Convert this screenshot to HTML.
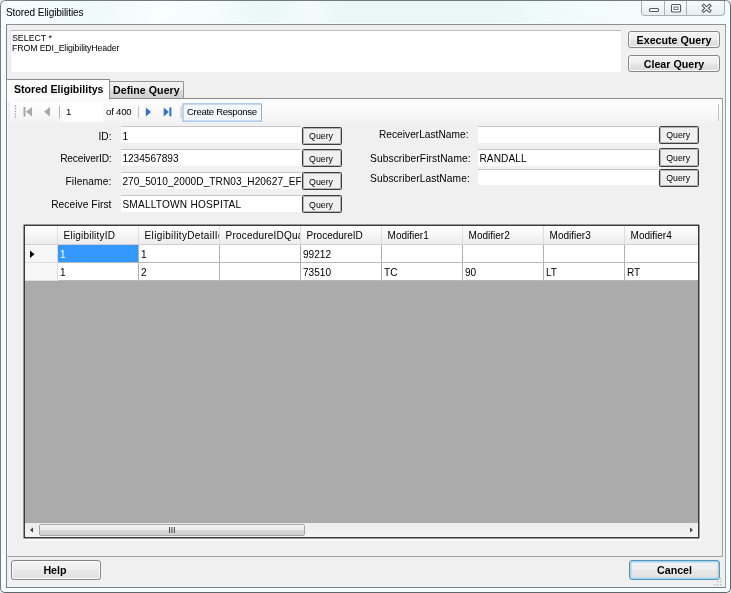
<!DOCTYPE html>
<html><head><meta charset="utf-8"><title>Stored Eligibilities</title>
<style>
html,body{margin:0;padding:0;}
body{width:731px;height:593px;position:relative;overflow:hidden;background:#e4e6e6;font-family:"Liberation Sans",sans-serif;color:#000;}
.a{position:absolute;will-change:transform;box-sizing:border-box;white-space:nowrap;}
.win{left:0;top:0;width:731px;height:593px;border:1px solid #687274;border-color:#717b7d #5e686a #5e686a #727c7e;border-radius:6px 6px 5px 5px;background:#f5fcfd;}
.client{left:6px;top:23.500px;width:720px;height:563.500px;border:1px solid #7b8081;border-right-color:#9a9fa0;border-top-color:#8b9192;background:#f0f0f0;}
.title{left:6.2px;top:6px;font-size:10.1px;letter-spacing:-0.11px;line-height:14px;color:#000;}
.cap{left:641px;top:1px;width:84px;height:15px;border:1px solid #a7b1b4;border-top:none;border-radius:0 0 4px 4px;background:linear-gradient(#f9fcfd,#e6eef1);}
.ta{left:10px;top:30px;width:611px;height:42px;background:#fff;border-top:1px solid #bcbcbc;border-left:1px solid #e8e8e8;}
.tatxt{left:11.9px;top:33.4px;font-size:8.8px;line-height:10.2px;white-space:pre;}
.btn{border:1px solid #868686;border-radius:3px;background:linear-gradient(#f4f4f4 0%,#efefef 48%,#e6e6e6 52%,#dbdbdb 100%);box-shadow:inset 0 0 0 1px #fbfbfb;text-align:center;font-weight:bold;font-size:10.7px;}
.tabsel{left:6px;top:79px;width:104px;height:22px;background:#fcfcfc;border:1px solid #8c8c8c;border-bottom:none;}
.tab2{left:109px;top:81px;width:75px;height:17px;border-radius:1.5px 1.5px 0 0;background:linear-gradient(#f3f3f3,#ececec 50%,#dcdcdc 50%,#d0d0d0);border:1px solid #969696;border-bottom:none;}
.tabtxt{font-weight:bold;font-size:10.6px;line-height:12px;}
.page{left:7px;top:98px;width:716px;height:459px;border:1px solid #8c8c8c;border-left-color:#fafafa;border-bottom-color:#a0a0a0;border-right-color:#9c9c9c;box-shadow:1px 0 0 #f9f9f9;background:#f0f0f0;}
.tool{left:10px;top:99px;width:712px;height:24px;background:linear-gradient(#f5f7f9 0%,#fdfdfd 14%,#fbfbfb 45%,#f2f2f2 100%);border-radius:3px;}
.tstxt{font-size:9.6px;line-height:12px;color:#000;}
.lbl{font-size:10.2px;line-height:12px;text-align:right;color:#000;}
.fld{background:#fff;border-top:1px solid #c6c6c6;border-radius:1px;font-size:10.1px;line-height:17px;padding-left:1.4px;overflow:hidden;color:#000;}
.qb{border:1px solid #3e3e3e;border-radius:1.5px;background:#f0f0f0;box-shadow:inset 0 0 0 1px #b4b4b4;font-size:8.8px;line-height:16.500px;text-indent:-1.600px;text-align:center;color:#000;}
.grid{left:24px;top:225px;width:674.500px;height:312.500px;border:1px solid #3a3a3a;background:#ababab;box-shadow:0 0 0 0.500px #3a3a3a,1px 1px 0 2px #f7f7f7;}
.gh{top:226px;height:19px;background:linear-gradient(#ffffff,#f4f4f4 60%,#ececec);border-right:1px solid #dedede;border-bottom:1px solid #cfcfcf;font-size:10px;line-height:20px;padding-left:5.600px;overflow:hidden;color:#000;}
.gc{height:18px;background:#fff;border-right:1px solid #b0b0b0;border-bottom:1px solid #b8b8b8;font-size:10.1px;line-height:19px;padding-left:2px;color:#000;}
.rh{left:25px;width:33px;background:#f6f6f6;border-right:1px solid #dcdcdc;border-bottom:1px solid #e0e0e0;}
</style></head><body>
<div class="a win"></div>
<div class="a" style="left:1px;top:1px;width:729px;height:22px;border-radius:5px 5px 0 0;background:linear-gradient(100deg,#f6fdfd 0%,#f0fafa 14%,#f9fefe 22%,#f4fcfc 30%,#e9f7f7 36%,#f3fbfb 42.500%,#e9f7f7 47%,#eaf7f7 68%,#f2fbfb 78%,#f5fcfd 100%);"></div>
<div class="a title">Stored Eligibilities</div>
<div class="a cap"></div>
<div class="a" style="left:664px;top:1px;width:1px;height:14px;background:#a9b3b6"></div>
<div class="a" style="left:686px;top:1px;width:1px;height:14px;background:#a9b3b6"></div>
<svg class="a" style="left:641px;top:0" width="84" height="16" viewBox="0 0 84 16">
 <rect x="8.5" y="8.5" width="9" height="3" rx="1" fill="#fff" stroke="#525c5f" stroke-width="1.1"/>
 <rect x="30.5" y="4.500" width="9" height="7.500" rx="1" fill="#fff" stroke="#525c5f" stroke-width="1.1"/>
 <rect x="33" y="7" width="4" height="2.500" fill="#fff" stroke="#5c6669" stroke-width="0.9"/>
 <g transform="translate(65.6 8.25)">
  <g fill="#4a5457"><rect x="-5.4" y="-1.7" width="10.8" height="3.4" rx="0.5" transform="rotate(41)"/><rect x="-5.4" y="-1.7" width="10.8" height="3.4" rx="0.5" transform="rotate(-41)"/></g>
  <g fill="#fff"><rect x="-4.4" y="-0.65" width="8.8" height="1.3" transform="rotate(41)"/><rect x="-4.4" y="-0.65" width="8.8" height="1.3" transform="rotate(-41)"/></g>
 </g>
</svg>
<div class="a client"></div>

<div class="a ta"></div>
<div class="a tatxt">SELECT *
<span style="letter-spacing:-0.14px">FROM EDI_EligibilityHeader</span></div>

<div class="a btn" style="left:628px;top:31px;width:92px;height:17px;line-height:17.500px;">Execute Query</div>
<div class="a btn" style="left:628px;top:55px;width:92px;height:17px;line-height:16.500px;">Clear Query</div>

<div class="a page"></div>
<div class="a tab2"></div>
<div class="a tabtxt" style="left:112.700px;top:83.700px;letter-spacing:0.07px;">Define Query</div>
<div class="a tabsel"></div>
<div class="a tabtxt" style="left:13.500px;top:83.300px;">Stored Eligibilitys</div>

<div class="a tool"></div>
<!-- grip -->
<svg class="a" style="left:10px;top:100px" width="260" height="22" viewBox="0 0 260 22">
 <g fill="#9a9a9a"><rect x="4.800" y="5.500" width="1.300" height="1.300"/><rect x="4.800" y="8.200" width="1.300" height="1.300"/><rect x="4.800" y="10.900" width="1.300" height="1.300"/><rect x="4.800" y="13.600" width="1.300" height="1.300"/><rect x="4.800" y="16.200" width="1.300" height="1.300"/></g>
 <g fill="#a8a8a8"><rect x="13.500" y="7" width="2" height="9.500"/><path d="M22 7 L22 16.500 L16 11.750 Z"/><path d="M40 7 L40 16.500 L34 11.750 Z"/></g>
 <rect x="49" y="6" width="1" height="12" fill="#b5b5b5"/>
 <rect x="52" y="3.500" width="41" height="18" fill="#fff"/>
 <rect x="128" y="6" width="1" height="12" fill="#c2c2c2"/>
 <g fill="#2f6fd0"><path d="M135.900 7.400 L135.900 16.400 L141 11.900 Z"/><path d="M153.700 7.400 L153.700 16.400 L158.900 11.900 Z"/><rect x="159.400" y="7.400" width="2" height="9"/></g>
 <rect x="170.500" y="6" width="1" height="12" fill="#c2c2c2"/>
 <rect x="173" y="3.900" width="78.500" height="17.200" fill="#f3f8fc" stroke="#7fb2e2" stroke-width="1"/>
</svg>
<div class="a" style="left:718px;top:104px;width:1px;height:17px;background:#c4c4c4"></div>
<div class="a tstxt" style="left:65.500px;top:105.500px;">1</div>
<div class="a tstxt" style="left:106.300px;top:105.500px;letter-spacing:-0.2px;">of 400</div>
<div class="a tstxt" style="left:187.200px;top:105.500px;letter-spacing:-0.32px;">Create Response</div>

<!-- left form -->
<div class="a lbl" style="left:20px;width:91.500px;top:131px;">ID:</div>
<div class="a lbl" style="left:20px;width:91.500px;top:152.800px;letter-spacing:-0.17px;">ReceiverID:</div>
<div class="a lbl" style="left:20px;width:91.500px;top:175.600px;letter-spacing:0.14px;">Filename:</div>
<div class="a lbl" style="left:20px;width:91.500px;top:198.600px;letter-spacing:0.07px;">Receive First</div>
<div class="a fld" style="left:121px;top:126px;width:180px;height:17px;line-height:19px;">1</div>
<div class="a fld" style="left:121px;top:149px;width:180px;height:17px;">1234567893</div>
<div class="a fld" style="left:121px;top:172px;width:180px;height:17px;letter-spacing:0.07px;">270_5010_2000D_TRN03_H20627_EFT</div>
<div class="a fld" style="left:121px;top:195px;width:180px;height:17px;letter-spacing:0.22px;">SMALLTOWN HOSPITAL</div>
<div class="a qb" style="left:302px;top:127px;width:39.700px;height:17.500px;">Query</div>
<div class="a qb" style="left:302px;top:149px;width:39.700px;height:17.600px;line-height:18.500px;">Query</div>
<div class="a qb" style="left:302px;top:172px;width:39.700px;height:17.700px;line-height:18.500px;">Query</div>
<div class="a qb" style="left:302px;top:195px;width:39.700px;height:17.600px;line-height:18.500px;">Query</div>

<!-- right form -->
<div class="a lbl" style="left:378.600px;text-align:left;top:129.300px;">ReceiverLastName:</div>
<div class="a lbl" style="left:369.600px;text-align:left;letter-spacing:0.11px;top:152.800px;">SubscriberFirstName:</div>
<div class="a lbl" style="left:370.400px;text-align:left;letter-spacing:0.1px;top:172.500px;">SubscriberLastName:</div>
<div class="a fld" style="left:478px;top:126px;width:180px;height:17px;"></div>
<div class="a fld" style="left:478px;top:149px;width:180px;height:17px;letter-spacing:0.12px;">RANDALL</div>
<div class="a fld" style="left:478px;top:169px;width:180px;height:16px;"></div>
<div class="a qb" style="left:659px;top:126px;width:40px;height:18px;">Query</div>
<div class="a qb" style="left:659px;top:148px;width:40px;height:18.500px;line-height:18.500px;">Query</div>
<div class="a qb" style="left:659px;top:169px;width:40px;height:18px;">Query</div>

<!-- grid -->
<div class="a grid"></div>
<div class="a gh" style="left:25px;width:33px;"></div>
<div class="a gh" style="left:58px;width:81px;letter-spacing:0.2px;">EligibilityID</div>
<div class="a gh" style="left:139px;width:81px;letter-spacing:0.34px;">EligibilityDetailId</div>
<div class="a gh" style="left:220px;width:81px;letter-spacing:0.2px;">ProcedureIDQualifier</div>
<div class="a gh" style="left:301px;width:81px;">ProcedureID</div>
<div class="a gh" style="left:382px;width:81px;">Modifier1</div>
<div class="a gh" style="left:463px;width:81px;">Modifier2</div>
<div class="a gh" style="left:544px;width:81px;">Modifier3</div>
<div class="a gh" style="left:625px;width:72.500px;border-right:none;">Modifier4</div>

<div class="a gc rh" style="top:245px;"></div>
<div class="a gc" style="left:58px;top:245px;width:81px;background:#3399ff;color:#fff;">1</div>
<div class="a gc" style="left:139px;top:245px;width:81px;">1</div>
<div class="a gc" style="left:220px;top:245px;width:81px;"></div>
<div class="a gc" style="left:301px;top:245px;width:81px;">99212</div>
<div class="a gc" style="left:382px;top:245px;width:81px;"></div>
<div class="a gc" style="left:463px;top:245px;width:81px;"></div>
<div class="a gc" style="left:544px;top:245px;width:81px;"></div>
<div class="a gc" style="left:625px;top:245px;width:72.500px;border-right:none;"></div>

<div class="a gc rh" style="top:263px;"></div>
<div class="a gc" style="left:58px;top:263px;width:81px;">1</div>
<div class="a gc" style="left:139px;top:263px;width:81px;">2</div>
<div class="a gc" style="left:220px;top:263px;width:81px;"></div>
<div class="a gc" style="left:301px;top:263px;width:81px;">73510</div>
<div class="a gc" style="left:382px;top:263px;width:81px;">TC</div>
<div class="a gc" style="left:463px;top:263px;width:81px;">90</div>
<div class="a gc" style="left:544px;top:263px;width:81px;">LT</div>
<div class="a gc" style="left:625px;top:263px;width:72.500px;border-right:none;">RT</div>
<svg class="a" style="left:29px;top:250px" width="8" height="9" viewBox="0 0 8 9"><path d="M1 0.500 L1 8 L5.500 4.250 Z" fill="#000"/></svg>

<!-- scrollbar -->
<div class="a" style="left:25px;top:523px;width:672.500px;height:13.500px;background:linear-gradient(#ececec,#f4f4f4);"></div>
<div class="a" style="left:39px;top:524px;width:266px;height:12px;border:1px solid #a6a6a6;border-radius:2px;background:linear-gradient(#f6f6f6,#e8e8e8 50%,#d8d8d8 52%,#cfcfcf);"></div>
<svg class="a" style="left:25px;top:523px" width="673" height="14" viewBox="0 0 673 14">
 <path d="M8 4.500 L8 9.500 L5 7 Z" fill="#404040"/>
 <path d="M665 4.500 L665 9.500 L668 7 Z" fill="#404040"/>
 <g fill="#484848"><rect x="144" y="4" width="1" height="6"/><rect x="146.400" y="4" width="1" height="6"/><rect x="148.800" y="4" width="1" height="6"/></g>
</svg>

<div class="a btn" style="left:11px;top:560px;width:90px;height:20px;line-height:18.600px;text-indent:-2px;background:linear-gradient(#f3f3f3 0%,#eeeeee 48%,#e8e8e8 52%,#e0e0e0 100%);">Help</div>
<div class="a btn" style="left:629px;top:560px;width:91px;height:20px;line-height:18.600px;border-color:#5990b6;box-shadow:inset 0 0 0 1.500px #9fd6f0;background:linear-gradient(#f3f3f3 0%,#eeeeee 48%,#e8e8e8 52%,#e0e0e0 100%);">Cancel</div>
<svg class="a" style="left:713px;top:577px" width="10" height="10" viewBox="0 0 10 10"><g fill="#c2c2c2"><rect x="7" y="7" width="1.500" height="1.500"/><rect x="7" y="4" width="1.500" height="1.500"/><rect x="4" y="7" width="1.500" height="1.500"/><rect x="7" y="1" width="1.500" height="1.500"/><rect x="4" y="4" width="1.500" height="1.500"/><rect x="1" y="7" width="1.500" height="1.500"/></g></svg>
</body></html>
